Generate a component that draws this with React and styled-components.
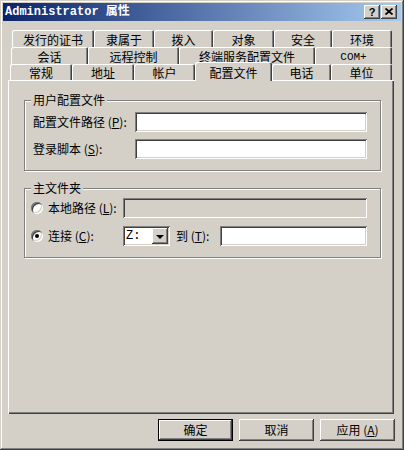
import React from 'react';
import styled, { createGlobalStyle, css } from 'styled-components';

const GlobalStyle = createGlobalStyle`
  html, body { margin: 0; padding: 0; background: #d4d0c8; }
  body {
    font-family: "Noto Sans CJK SC", "Liberation Sans", sans-serif;
    font-size: 12px;
    color: #000;
  }
  * { box-sizing: border-box; }
`;

const raised = css`
  box-shadow: inset -1px -1px #404040, inset 1px 1px #fff, inset -2px -2px #808080, inset 2px 2px #d4d0c8;
`;
const sunken = css`
  box-shadow: inset 1px 1px #808080, inset -1px -1px #fff, inset 2px 2px #404040, inset -2px -2px #d4d0c8;
`;

const Window = styled.div`
  width: 404px;
  height: 450px;
  padding: 3px;
  background: #d4d0c8;
  box-shadow: inset -1px -1px #404040, inset 1px 1px #d4d0c8, inset -2px -2px #808080, inset 2px 2px #fff;
  display: flex;
  flex-direction: column;
`;

const TitleBar = styled.div`
  height: 18px;
  display: flex;
  align-items: center;
  padding: 0 4px 0 2px;
  background: linear-gradient(to right, #0a246a, #a6caf0);
`;

const TitleText = styled.div`
  flex: 1;
  color: #fff;
  font: bold 12px "Liberation Mono", "Noto Sans CJK SC", monospace;
  white-space: nowrap;
  line-height: 18px;
`;

const CaptionButtons = styled.div`
  display: flex;
  gap: 1px;
`;

const CaptionButton = styled.div`
  width: 16px;
  height: 14px;
  background: #d4d0c8;
  ${raised};
  display: flex;
  align-items: center;
  justify-content: center;
  font: bold 11px "Liberation Sans", sans-serif;
  line-height: 14px;
  padding-bottom: 1px;
`;

const Body = styled.div`
  display: flex;
  flex-direction: column;
  padding: 9px 7px 0 5px;
`;

const TabRow = styled.div`
  display: flex;
  height: ${p => p.$h}px;
  padding-left: ${p => p.$indent}px;
`;

const Tab = styled.div`
  position: relative;
  z-index: ${p => (p.$active ? 2 : 1)};
  width: ${p => p.$w}px;
  flex: none;
  align-self: ${p => (p.$active ? 'flex-start' : 'stretch')};
  height: ${p => (p.$active ? '19px' : 'auto')};
  margin-top: ${p => (p.$active ? '-2px' : '0')};
  background: #d4d0c8;
  border-top-left-radius: 2px;
  border-top-right-radius: 2px;
  box-shadow: inset 1px 1px #fff, inset -1px 0 #404040, inset -2px 0 #808080;
  display: flex;
  align-items: center;
  justify-content: center;
  padding-top: 2px;
  line-height: 12px;
  white-space: nowrap;
`;

const LatinTab = styled.span`
  font-family: "Liberation Mono", monospace;
  font-size: 11px;
`;

const Panel = styled.div`
  height: 334px;
  padding: 14px 13px 0 16px;
  background: #d4d0c8;
  box-shadow: inset 1px 1px #fff, inset -1px -1px #404040, inset -2px -2px #808080;
  display: flex;
  flex-direction: column;
  gap: ${p => p.$gap}px;
`;

const GroupBox = styled.fieldset`
  margin: 0;
  padding: 0 12px 0 0;
  min-width: 0;
  border: 1px solid #808080;
  box-shadow: inset 1px 1px #fff, 1px 1px #fff;
`;

const Legend = styled.legend`
  margin-left: 6px;
  padding: 0 2px;
  line-height: 12px;
  background: #d4d0c8;
`;

const Rows = styled.div`
  display: flex;
  flex-direction: column;
  gap: ${p => p.$gap}px;
  padding: ${p => p.$pt}px 0 11px ${p => p.$pl}px;
`;

const Row = styled.div`
  display: flex;
  align-items: center;
  height: 20px;
`;

const FieldLabel = styled.label`
  width: ${p => p.$w}px;
  flex: none;
  white-space: nowrap;
  line-height: 12px;
`;

const Acc = styled.span`
  text-decoration: underline;
`;

const TextBox = styled.div`
  width: ${p => p.$w}px;
  height: 20px;
  flex: none;
  background: ${p => (p.$disabled ? '#d4d0c8' : '#fff')};
  ${sunken};
`;

const RadioCircle = styled.span`
  width: 12px;
  height: 12px;
  flex: none;
  border-radius: 50%;
  background: #fff;
  margin-right: 5px;
  box-shadow: inset 1px 1px #808080, inset -1px -1px #fff, inset 2px 2px #404040, inset -2px -2px #d4d0c8;
  display: flex;
  align-items: center;
  justify-content: center;
  &::after {
    content: '';
    display: ${p => (p.$checked ? 'block' : 'none')};
    width: 4px;
    height: 4px;
    border-radius: 50%;
    background: #000;
  }
`;

const Combo = styled.div`
  width: 47px;
  height: 20px;
  flex: none;
  padding: 2px;
  background: #fff;
  ${sunken};
  display: flex;
`;

const ComboText = styled.div`
  flex: 1;
  font: 12px "Liberation Mono", monospace;
  line-height: 16px;
  padding-left: 1px;
`;

const DropButton = styled.div`
  width: 16px;
  height: 16px;
  background: #d4d0c8;
  ${raised};
  display: flex;
  align-items: center;
  justify-content: center;
  &::after {
    content: '';
    width: 0;
    height: 0;
    border-left: 4px solid transparent;
    border-right: 4px solid transparent;
    border-top: 4px solid #000;
    margin-top: 1px;
  }
`;

const ToLabel = styled.label`
  width: 44px;
  margin-left: 6px;
  flex: none;
  white-space: nowrap;
  line-height: 12px;
`;

const ButtonBar = styled.div`
  display: flex;
  justify-content: flex-end;
  gap: 6px;
  padding: 5px 6px 0 0;
`;

const PushButton = styled.div`
  width: 75px;
  height: 22px;
  background: #d4d0c8;
  display: flex;
  align-items: center;
  justify-content: center;
  line-height: 12px;
  ${p =>
    p.$default
      ? css`box-shadow: inset 0 0 0 1px #000, inset -2px -2px #404040, inset 2px 2px #fff, inset -3px -3px #808080;`
      : raised};
`;

const rows = [
  { indent: 4, h: 17, tabs: [['发行的证书', 82], ['隶属于', 60], ['拨入', 59], ['对象', 61], ['安全', 58], ['环境', 60]] },
  { indent: 3, h: 17, tabs: [['会话', 77], ['远程控制', 91], ['终端服务配置文件', 136], ['COM+', 77]] },
  { indent: 2, h: 16, tabs: [['常规', 62], ['地址', 62], ['帐户', 61], ['配置文件', 77], ['电话', 59], ['单位', 61]] },
];

export default function App() {
  return (
    <>
      <GlobalStyle />
      <Window>
        <TitleBar>
          <TitleText>Administrator 属性</TitleText>
          <CaptionButtons>
            <CaptionButton>?</CaptionButton>
            <CaptionButton>
              <svg width="8" height="7" viewBox="0 0 8 7">
                <path d="M0.5 0.5 L7.5 6.5 M7.5 0.5 L0.5 6.5" stroke="#000" strokeWidth="1.8" fill="none" />
              </svg>
            </CaptionButton>
          </CaptionButtons>
        </TitleBar>
        <Body>
          {rows.map((r, i) => (
            <TabRow key={i} $indent={r.indent} $h={r.h}>
              {r.tabs.map(([label, w]) => (
                <Tab key={label} $w={w} $active={label === '配置文件'}>
                  {label === 'COM+' ? <LatinTab>{label}</LatinTab> : label}
                </Tab>
              ))}
            </TabRow>
          ))}
          <Panel $gap={11}>
            <GroupBox>
              <Legend>用户配置文件</Legend>
              <Rows $pt={6} $gap={7} $pl={8}>
                <Row>
                  <FieldLabel $w={102}>配置文件路径 (<Acc>P</Acc>):</FieldLabel>
                  <TextBox $w={232} />
                </Row>
                <Row>
                  <FieldLabel $w={102}>登录脚本 (<Acc>S</Acc>):</FieldLabel>
                  <TextBox $w={232} />
                </Row>
              </Rows>
            </GroupBox>
            <GroupBox>
              <Legend>主文件夹</Legend>
              <Rows $pt={4} $gap={8} $pl={6}>
                <Row>
                  <RadioCircle />
                  <FieldLabel $w={75}>本地路径 (<Acc>L</Acc>):</FieldLabel>
                  <TextBox $w={244} $disabled />
                </Row>
                <Row>
                  <RadioCircle $checked />
                  <FieldLabel $w={75}>连接 (<Acc>C</Acc>):</FieldLabel>
                  <Combo>
                    <ComboText>Z:</ComboText>
                    <DropButton />
                  </Combo>
                  <ToLabel>到 (<Acc>T</Acc>):</ToLabel>
                  <TextBox $w={147} />
                </Row>
              </Rows>
            </GroupBox>
          </Panel>
        </Body>
        <ButtonBar>
          <PushButton $default>确定</PushButton>
          <PushButton>取消</PushButton>
          <PushButton>应用 (<Acc>A</Acc>)</PushButton>
        </ButtonBar>
      </Window>
    </>
  );
}
